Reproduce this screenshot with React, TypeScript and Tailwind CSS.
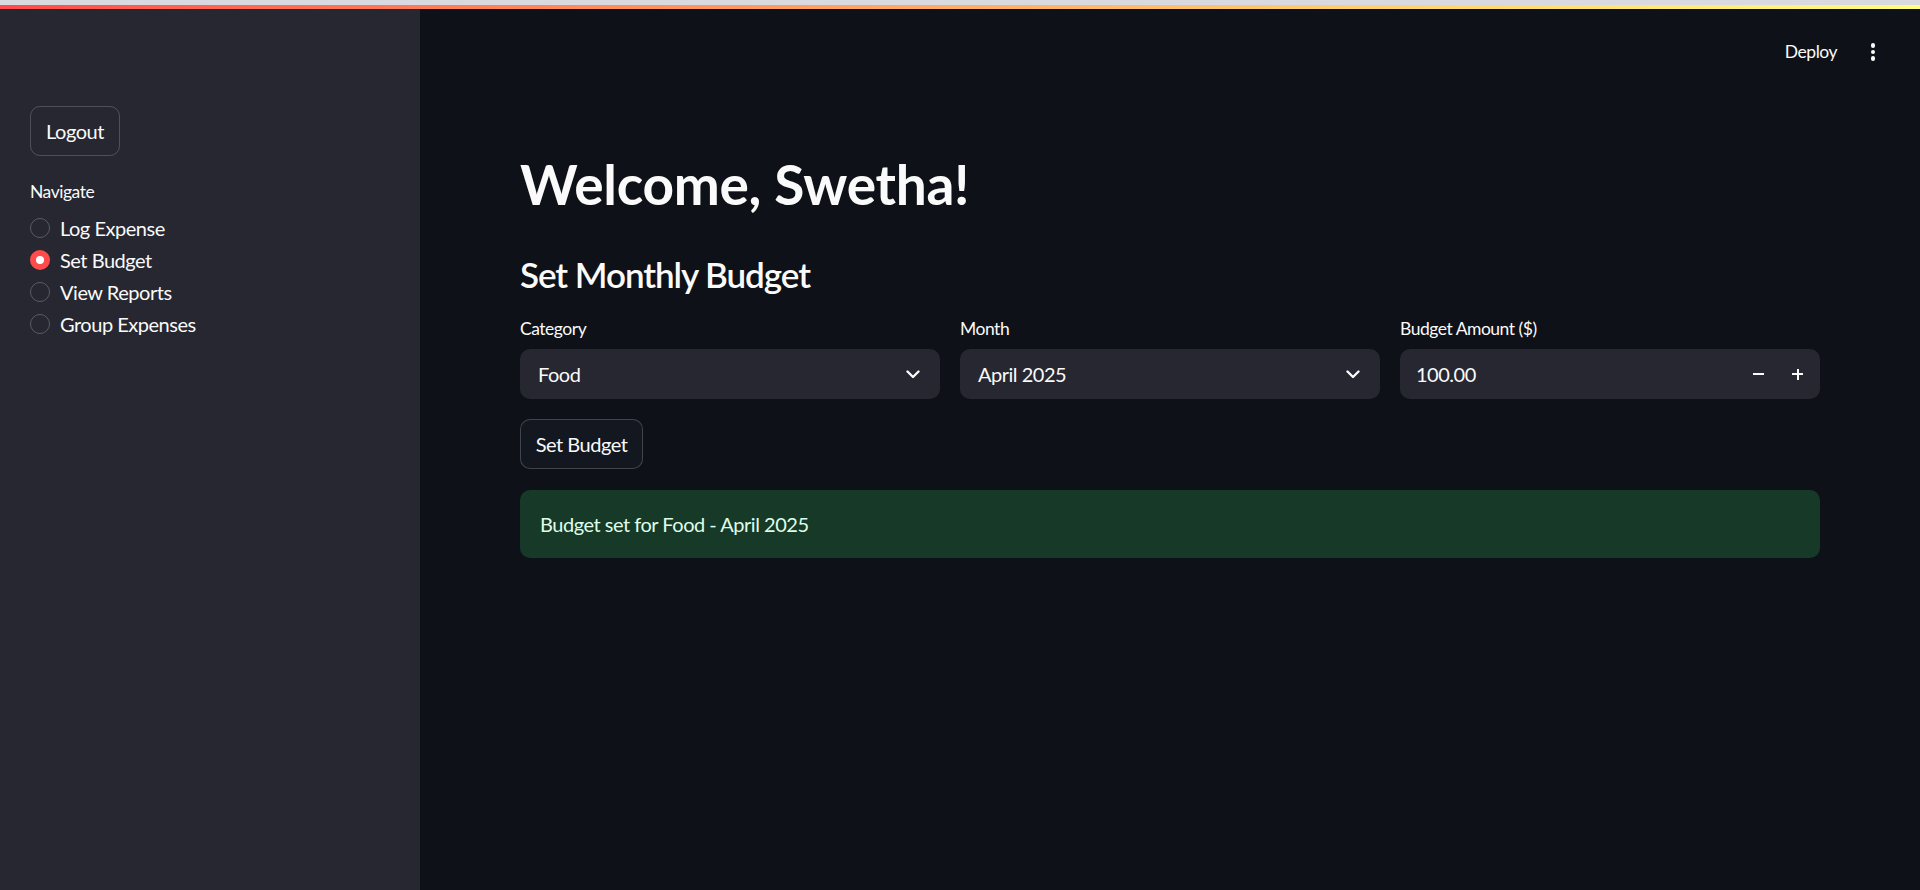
import React from "react";

const navItems = ["Log Expense", "Set Budget", "View Reports", "Group Expenses"];
const selected = "Set Budget";

const Chevron = () => (
  <svg width="14" height="9" viewBox="0 0 14 9" fill="none">
    <path d="M1.5 1.5 7 7l5.5-5.5" stroke="#fafafa" strokeWidth="2.4" strokeLinecap="round" strokeLinejoin="round" />
  </svg>
);

const SelectBox = ({ label, value }: { label: string; value: string }) => (
  <div className="flex flex-col">
    <div className="h-[21px] leading-[21px] text-[17.5px] text-[#fafafa]">{label}</div>
    <div className="mt-[10px] h-[50px] rounded-[10px] bg-[#262730] flex items-center justify-between pl-[18px] pr-[20px]">
      <span className="text-[20px] text-[#fafafa]">{value}</span>
      <Chevron />
    </div>
  </div>
);

export default function App() {
  return (
    <div
      className="w-full h-screen flex flex-col bg-[#0e1117] text-[#fafafa] overflow-hidden tracking-[-0.03em]"
      style={{ fontFamily: "Lato, 'Noto Sans', sans-serif" }}
    >
      <div className="h-[5px] bg-[#d9dadf]" />
      <div className="h-[4px] bg-gradient-to-r from-[#ff4b4b] to-[#fffd80]" />

      <div className="flex flex-1">
        {/* sidebar */}
        <aside className="w-[420px] bg-[#262730] px-[30px] pt-[97px]">
          <button className="w-[90px] h-[50px] rounded-[10px] border border-[#fafafa33] text-[20px] flex items-center justify-center">
            Logout
          </button>
          <div className="mt-[24px] h-[25px] flex items-center text-[17.5px]">Navigate</div>
          <div className="mt-[7px] flex flex-col">
            {navItems.map((item) => {
              const on = item === selected;
              return (
                <div key={item} className="h-[32px] flex items-center gap-[10px]">
                  {on ? (
                    <span className="w-[20px] h-[20px] rounded-full bg-[#ff4b4b] flex items-center justify-center">
                      <span className="w-[8px] h-[8px] rounded-full bg-white" />
                    </span>
                  ) : (
                    <span className="w-[20px] h-[20px] rounded-full border border-[#5a5b63]" />
                  )}
                  <span className="text-[20px] leading-[24px]">{item}</span>
                </div>
              );
            })}
          </div>
        </aside>

        {/* main */}
        <main className="flex-1 flex flex-col">
          <header className="h-[86px] flex items-center justify-end pr-[27px]">
            <span className="text-[17.5px]">Deploy</span>
            <div className="ml-[16px] w-[40px] h-[40px] flex flex-col items-center justify-center gap-[2px]">
              <span className="w-[4.5px] h-[4.5px] rounded-full bg-[#fafafa]" />
              <span className="w-[4.5px] h-[4.5px] rounded-full bg-[#fafafa]" />
              <span className="w-[4.5px] h-[4.5px] rounded-full bg-[#fafafa]" />
            </div>
          </header>

          <div className="px-[100px] flex flex-col">
            <h1 className="mt-[56px] text-[55px] leading-[66px] font-bold tracking-[-0.005em]">Welcome, Swetha!</h1>
            <h3 className="mt-[36px] text-[35px] leading-[42px] font-semibold tracking-[-0.03em]">Set Monthly Budget</h3>

            <div className="mt-[23px] grid grid-cols-3 gap-[20px]">
              <SelectBox label="Category" value="Food" />
              <SelectBox label="Month" value="April 2025" />
              <div className="flex flex-col">
                <div className="h-[21px] leading-[21px] text-[17.5px]">Budget Amount ($)</div>
                <div className="mt-[10px] h-[50px] rounded-[10px] bg-[#262730] flex items-center pl-[16px] pr-[3px]">
                  <span className="flex-1 text-[20px]">100.00</span>
                  <span className="w-[39px] h-full flex items-center justify-center">
                    <span className="w-[11px] h-[2px] bg-[#fafafa]" />
                  </span>
                  <span className="w-[39px] h-full flex items-center justify-center relative">
                    <span className="w-[11px] h-[2px] bg-[#fafafa]" />
                    <span className="absolute w-[2px] h-[11px] bg-[#fafafa]" />
                  </span>
                </div>
              </div>
            </div>

            <button className="mt-[20px] w-[123px] h-[50px] rounded-[10px] border border-[#fafafa33] bg-[#131720] text-[20px] flex items-center justify-center">
              Set Budget
            </button>

            <div className="mt-[21px] h-[68px] rounded-[10px] bg-[#173928] flex items-center px-[20px]">
              <span className="text-[20px] text-[#dffde9]">Budget set for Food - April 2025</span>
            </div>
          </div>
        </main>
      </div>
    </div>
  );
}
